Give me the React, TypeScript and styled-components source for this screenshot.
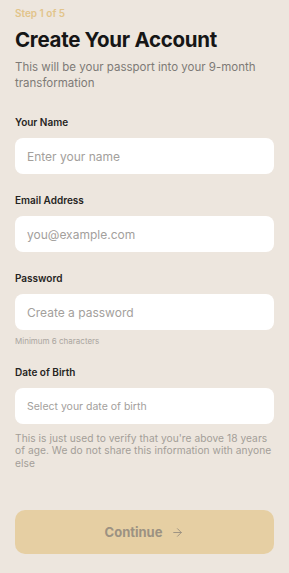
import * as React from "react";
import styled, { createGlobalStyle } from "styled-components";
import { ArrowRight } from "lucide-react";

const GlobalStyle = createGlobalStyle`
  html, body {
    margin: 0;
    padding: 0;
    background: #ede6de;
  }
  * {
    box-sizing: border-box;
  }
  body {
    font-family: Inter, "Noto Sans", "Liberation Sans", sans-serif;
    -webkit-font-smoothing: antialiased;
  }
`;

// Fields of the form
const fields = [
  { id: "name", label: "Your Name", placeholder: "Enter your name", type: "text" },
  { id: "email", label: "Email Address", placeholder: "you@example.com", type: "email" },
  {
    id: "password",
    label: "Password",
    placeholder: "Create a password",
    type: "password",
    hint: "Minimum 6 characters",
  },
];

const App: React.FC = () => {
  return (
    <>
      <GlobalStyle />
      <Page>
        <Header>
          <Step>Step 1 of 5</Step>
          <Title>Create Your Account</Title>
          <Subtitle>This will be your passport into your 9-month transformation</Subtitle>
        </Header>

        <Form>
          {fields.map((f) => (
            <Field key={f.id}>
              <Label htmlFor={f.id}>{f.label}</Label>
              <Input id={f.id} type={f.type} placeholder={f.placeholder} />
              {f.hint && <Hint>{f.hint}</Hint>}
            </Field>
          ))}

          <Field>
            <Label htmlFor="dob">Date of Birth</Label>
            <Input id="dob" type="text" placeholder="Select your date of birth" $small />
            <Note>
              This is just used to verify that you're above 18 years of age. We do not share
              this information with anyone else
            </Note>
          </Field>
        </Form>

        <Footer>
          <Button type="button" disabled>
            Continue
            <ArrowRight size={13} strokeWidth={1.8} />
          </Button>
        </Footer>
      </Page>
    </>
  );
};

// Styling
const Page = styled.div`
  min-height: 573px;
  display: flex;
  flex-direction: column;
  padding: 7px 15px 19px;
  background: #ede6de;
`;

const Header = styled.header`
  display: flex;
  flex-direction: column;
`;

const Step = styled.span`
  font-size: 10px;
  line-height: 13px;
  font-weight: 600;
  color: #e2c48a;
`;

const Title = styled.h1`
  margin: 7px 0 0;
  font-size: 20.5px;
  line-height: 26px;
  font-weight: 700;
  letter-spacing: -0.3px;
  color: #161616;
`;

const Subtitle = styled.p`
  margin: 6px 0 0;
  font-size: 11.5px;
  line-height: 16px;
  color: #7d7a76;
`;

const Form = styled.form`
  display: flex;
  flex-direction: column;
  gap: 19.5px;
  margin-top: 24.5px;
  flex: 1;
`;

const Field = styled.div`
  display: flex;
  flex-direction: column;
`;

const Label = styled.label`
  font-size: 10px;
  line-height: 13px;
  font-weight: 600;
  color: #262422;
  margin-bottom: 9.5px;
`;

const Input = styled.input<{ $small?: boolean }>`
  width: 100%;
  height: 36px;
  border: none;
  border-radius: 8px;
  background: #ffffff;
  padding: 0 12px;
  font-family: inherit;
  font-size: ${(p) => (p.$small ? "10.5px" : "12px")};
  color: #222;
  outline: none;

  &::placeholder {
    color: #a3a09c;
  }
`;

const Hint = styled.span`
  margin-top: 6px;
  font-size: 8px;
  line-height: 10px;
  color: #aaa59f;
`;

const Note = styled.p`
  margin: 7.5px 0 0;
  font-size: 10.2px;
  line-height: 12.7px;
  letter-spacing: 0.05px;
  color: #a39e98;
`;

const Footer = styled.div`
  display: flex;
`;

const Button = styled.button`
  width: 100%;
  height: 44px;
  border: none;
  border-radius: 10px;
  background: #e6cfa3;
  color: #9c9282;
  font-family: inherit;
  font-size: 13px;
  font-weight: 700;
  display: flex;
  align-items: center;
  justify-content: center;
  gap: 9px;
  cursor: not-allowed;

  svg {
    margin-top: 1px;
  }
`;

export default App;
